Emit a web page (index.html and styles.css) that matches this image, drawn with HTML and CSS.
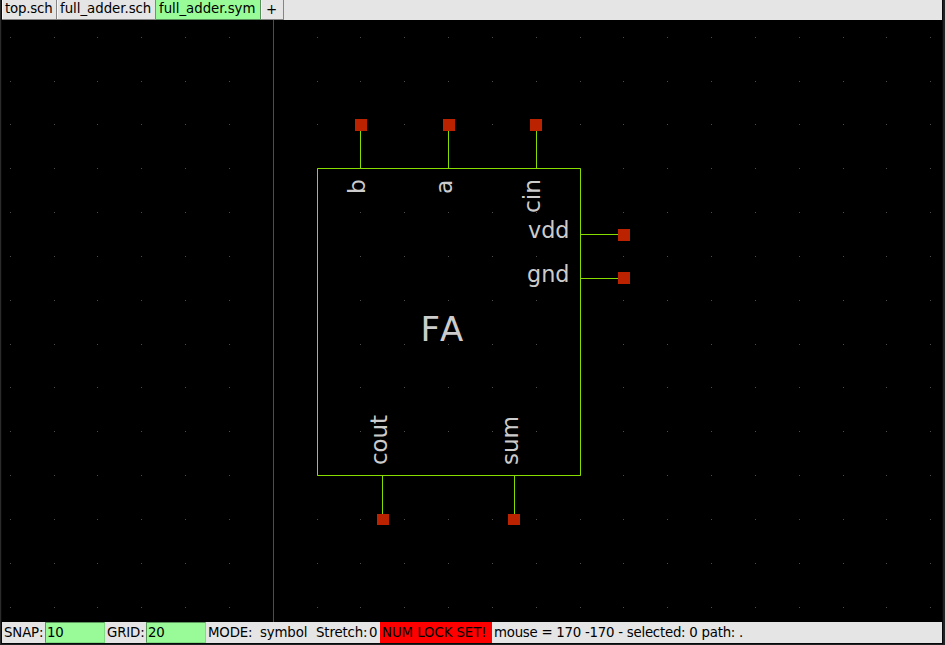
FILE: index.html
```html
<!DOCTYPE html>
<html lang="en">
<head>
<meta charset="utf-8">
<title>full_adder.sym</title>
<link rel="stylesheet" href="styles.css">
</head>
<body>
<div class="window">
  <nav class="tabs">
    <button class="tab tab-top">top.sch</button>
    <button class="tab tab-sch">full_adder.sch</button>
    <button class="tab tab-sym active">full_adder.sym</button>
    <button class="tab tab-add">+</button>
  </nav>
  <svg class="canvas" viewBox="2 20 940 602" width="940" height="602">
    <defs>
      <path id="row" class="dots" d="M10 .5h1M54 .5h1M97 .5h1M141 .5h1M185 .5h1M229 .5h1M317 .5h1M360 .5h1M404 .5h1M448 .5h1M492 .5h1M536 .5h1M580 .5h1M623 .5h1M667 .5h1M711 .5h1M755 .5h1M799 .5h1M843 .5h1M886 .5h1M930 .5h1"/>
    </defs>
    <use href="#row" y="37"/><use href="#row" y="81"/><use href="#row" y="124"/><use href="#row" y="168"/>
    <use href="#row" y="212"/><use href="#row" y="256"/><use href="#row" y="300"/><use href="#row" y="344"/>
    <use href="#row" y="387"/><use href="#row" y="431"/><use href="#row" y="475"/><use href="#row" y="519"/>
    <use href="#row" y="563"/><use href="#row" y="607"/>
    <path class="axis" d="M273.5 20v602"/>
    <path class="wire" d="M317.5 168.5h263v307h-263zM360.5 125v43M448.5 125v43M536.5 125v43M581 234.5h43M581 278.5h43M382.5 476v43M514.5 476v43"/>
    <g class="pins">
      <rect x="355" y="119" width="12" height="12"/>
      <rect x="443" y="119" width="12" height="12"/>
      <rect x="530" y="119" width="12" height="12"/>
      <rect x="618" y="229" width="12" height="12"/>
      <rect x="618" y="272" width="12" height="12"/>
      <rect x="377" y="514" width="12" height="11"/>
      <rect x="508" y="514" width="12" height="11"/>
    </g>
    <g class="labels">
      <text transform="translate(365 194) rotate(-90)">b</text>
      <text transform="translate(452 194) rotate(-90)">a</text>
      <text transform="translate(540 213) rotate(-90)">cin</text>
      <text x="528" y="238" textLength="41.5" lengthAdjust="spacingAndGlyphs">vdd</text>
      <text x="527" y="282" textLength="42.5" lengthAdjust="spacingAndGlyphs">gnd</text>
      <text class="name" x="420.5" y="341">FA</text>
      <text transform="translate(387 465) rotate(-90)" textLength="50" lengthAdjust="spacingAndGlyphs">cout</text>
      <text transform="translate(518 465) rotate(-90)" textLength="49" lengthAdjust="spacingAndGlyphs">sum</text>
    </g>
  </svg>
  <footer class="status">
    <span class="caption snap">SNAP:</span><span class="entry">10</span>
    <span class="caption grid">GRID:</span><span class="entry">20</span>
    <span class="caption mode">MODE:</span><span class="caption kind">symbol</span>
    <span class="caption stretch">Stretch:</span><span class="caption count">0</span>
    <span class="alert">NUM LOCK SET!</span>
    <span class="caption info">mouse = 170 -170 - selected: 0 path: .</span>
  </footer>
</div>
</body>
</html>
```
FILE: styles.css
```css
* { box-sizing: border-box; }
body {
  margin: 0;
  background: #202224;
  font-family: "DejaVu Sans", sans-serif;
  font-size: 13.33px;
  color: #000;
}
.window {
  width: 943px;
  height: 644px;
  padding-left: 1px;
  border-left: 1px solid #2b2b2b;
  background: #08090b;
  overflow: hidden;
}
.tabs {
  display: flex;
  width: 940px;
  height: 20px;
  background: #e5e5e5;
}
.tab {
  height: 20px;
  margin: 0;
  padding: 0 0 2px 3px;
  border: 0 solid #858585;
  border-width: 0 1px 1px 0;
  box-shadow: inset 1px 0 #f6f6f6;
  background: #e5e5e5;
  color: #000;
  font: inherit;
  letter-spacing: -0.03px;
  line-height: 17px;
  text-align: left;
  white-space: nowrap;
}
.tab-top { width: 55px; letter-spacing: -0.2px; }
.tab-sch { width: 99px; }
.tab-sym { width: 105px; }
.tab-add { width: 23px; padding-left: 5px; line-height: 19px; padding-bottom: 0; }
.active {
  background: #98fb98;
  border-color: #57905a;
  box-shadow: none;
}
.canvas { display: block; background: #000; }
.dots { stroke: #4d4d4d; fill: none; }
.axis { stroke: #4d4d4d; }
.wire { stroke: #88dd00; fill: none; }
.pins { fill: #bb2200; }
.labels { fill: #cccccc; font-size: 23.4px; }
.name { font-size: 34px; font-kerning: none; }
.status {
  display: flex;
  width: 940px;
  height: 21px;
  background: #e5e5e5;
  line-height: 21px;
  white-space: nowrap;
}
.caption { flex: none; padding-left: 2px; letter-spacing: -0.15px; }
.snap { width: 43px; }
.grid { width: 41px; }
.mode { width: 52px; }
.kind { width: 56px; }
.stretch { width: 55px; }
.count { width: 11px; padding-left: 0; }
.info { letter-spacing: -0.25px; }
.entry {
  flex: none;
  width: 60px;
  padding-left: 1px;
  border: 1px solid #80dc80;
  border-top-color: #5b965b;
  border-left-color: #5b965b;
  background: #98fb98;
  letter-spacing: -0.3px;
  line-height: 19px;
}
.alert { flex: none; width: 112px; padding-left: 2px; background: #f00; letter-spacing: -0.08px; }
```
